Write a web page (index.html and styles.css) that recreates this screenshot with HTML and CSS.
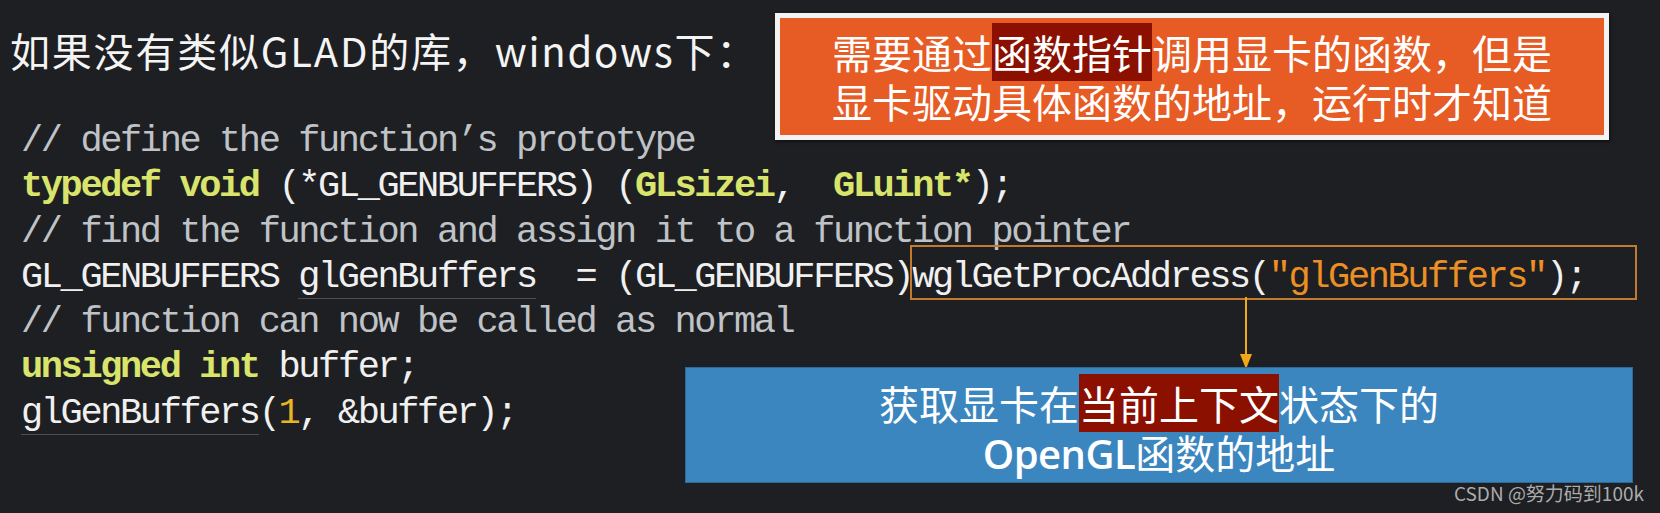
FILE: index.html
```html
<!DOCTYPE html>
<html lang="zh-CN">
<head>
<meta charset="utf-8">
<title>GLAD</title>
<link rel="stylesheet" href="styles.css">
</head>
<body>
<div class="slide">
  <h1 class="title">如果没有类似GLAD的库，windows下：</h1>
  <div class="code">
    <div class="line"><span class="cm">// define the function’s prototype</span></div>
    <div class="line"><span class="kw">typedef</span> <span class="kw">void</span> (*GL_GENBUFFERS) (<span class="kw">GLsizei</span>,  <span class="kw">GLuint*</span>);</div>
    <div class="line"><span class="cm">// find the function and assign it to a function pointer</span></div>
    <div class="line">GL_GENBUFFERS <span class="ref">glGenBuffers</span>  = (GL_GENBUFFERS)<span class="mark">wglGetProcAddress(<span class="str">"glGenBuffers"</span>);</span></div>
    <div class="line"><span class="cm">// function can now be called as normal</span></div>
    <div class="line"><span class="kw">unsigned</span> <span class="kw">int</span> buffer;</div>
    <div class="line"><span class="ref">glGenBuffers</span>(<span class="num">1</span>, &amp;buffer);</div>
  </div>

  <div class="callout callout-orange">
    <p>需要通过<span class="hl">函数指针</span>调用显卡的函数，但是</p>
    <p>显卡驱动具体函数的地址，运行时才知道</p>
  </div>

  <svg class="arrow" width="14" height="72" viewBox="0 0 14 72">
    <line x1="7" y1="0" x2="7" y2="60" stroke="#f2a71b" stroke-width="2"/>
    <polygon points="1,57 13,57 7,72" fill="#f2a71b"/>
  </svg>

  <div class="callout callout-blue">
    <p>获取显卡在<span class="hl">当前上下文</span>状态下的</p>
    <p><span class="latin">OpenGL</span>函数的地址</p>
  </div>

  <div class="watermark">CSDN @努力码到100k</div>
</div>
</body>
</html>
```

FILE: styles.css
```css
html, body {
  margin: 0;
  padding: 0;
  background: #1e1f22;
}

.slide {
  position: relative;
  width: 1660px;
  height: 513px;
  overflow: hidden;
  background: #1e1f22;
  color: #f2f2f2;
}

.title {
  margin: 0;
  padding: 26px 0 0 10px;
  font-family: "Noto Sans CJK SC", "Noto Sans", sans-serif;
  font-weight: 400;
  font-size: 40px;
  line-height: 48px;
  color: #f4f4f4;
  letter-spacing: 1.8px;
}

.code {
  margin-top: 45px;
  padding-left: 21px;
  font-family: "Liberation Mono", monospace;
  font-size: 37px;
  letter-spacing: -2.4px;
  line-height: 45.3px;
  color: #f0f0f0;
}

.line {
  height: 45.3px;
  white-space: pre;
}

.cm {
  color: #bfc3c7;
}

.kw {
  color: #d8e46c;
  font-weight: 700;
}

.str {
  color: #ec8f24;
}

.num {
  color: #e9b425;
}

.ref {
  border-bottom: 1px solid #4b4d52;
}

.mark {
  border: 2px solid #c47a2e;
  margin-left: -2px;
  padding: 9px 49px 0 0;
}

.callout {
  position: absolute;
  box-sizing: border-box;
  text-align: center;
  font-family: "Noto Sans CJK SC", sans-serif;
  font-size: 40px;
  line-height: 49px;
  color: #ffffff;
}

.callout p {
  margin: 0;
}

.callout-orange {
  left: 775px;
  top: 13px;
  width: 834px;
  height: 127px;
  padding-top: 10px;
  background: #e65c24;
  border: 5px solid #f3f3f3;
  box-shadow: 1px 2px 3px rgba(0, 0, 0, 0.5);
}

.callout-blue {
  left: 685px;
  top: 367px;
  width: 948px;
  height: 116px;
  padding-top: 11px;
  background: #3c86bf;
  border: 1px solid #2c6a9b;
}

.hl {
  background: #8b1000;
}

.latin {
  font-family: "Open Sans", "Noto Sans", sans-serif;
  font-weight: 600;
  letter-spacing: -0.5px;
}

.arrow {
  position: absolute;
  left: 1239px;
  top: 297px;
}

.watermark {
  position: absolute;
  right: 16px;
  bottom: 8px;
  font-family: "Noto Sans CJK SC", sans-serif;
  font-size: 19px;
  line-height: 24px;
  color: rgba(220, 220, 220, 0.75);
}
```
